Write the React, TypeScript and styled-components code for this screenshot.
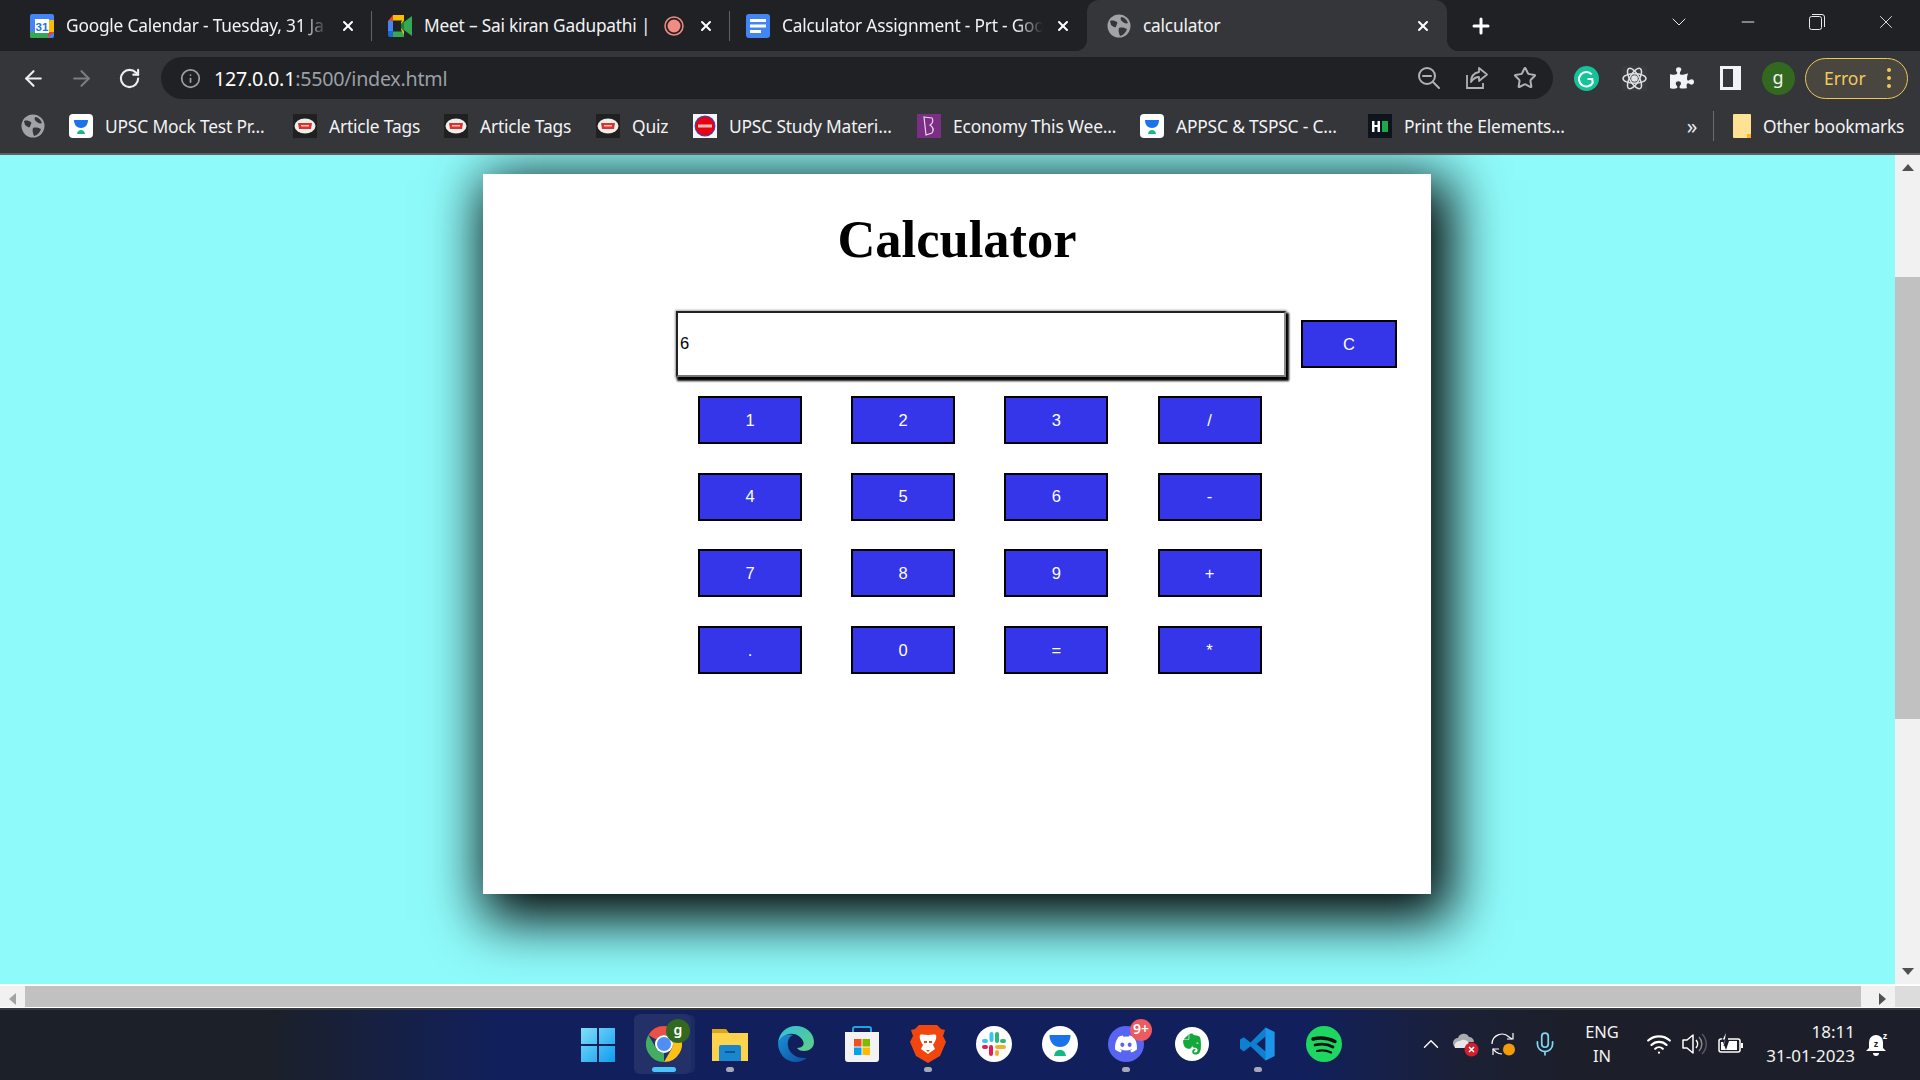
import React from "react";
import styled, { createGlobalStyle } from "styled-components";
import { ArrowLeft, ArrowRight, RotateCw, Info, Star, Plus, X, Minus, ChevronDown, ChevronUp, Wifi, Mic } from "lucide-react";
import { FaDiscord, FaEvernote, FaPuzzlePiece } from "react-icons/fa";

const Global = createGlobalStyle`
  html, body { margin: 0; padding: 0; overflow: hidden; background: #202124; }
  * { box-sizing: border-box; }
`;
const UI = `"Noto Sans", "Open Sans", sans-serif`;

const Screen = styled.div`
  width: 1920px; height: 1080px; display: flex; flex-direction: column; overflow: hidden;
  font-family: ${UI}; color: #e8eaed;
`;
/* ---------- tab strip ---------- */
const TabStrip = styled.div`
  height: 51px; background: #202124; display: flex; align-items: stretch; padding-left: 14px; flex: none;
`;
const Tab = styled.div<{ $w: number; $active?: boolean; $sep?: boolean }>`
  position: relative; width: ${p => p.$w}px; display: flex; align-items: center; gap: 12px;
  padding: 0 16px 0 ${p => (p.$active ? 20 : 16)}px;
  background: ${p => (p.$active ? "#35363a" : "transparent")};
  border-radius: ${p => (p.$active ? "12px 12px 0 0" : "0")};
  ${p => p.$sep && `&::after { content: ""; position: absolute; right: 0; top: 11px; height: 30px; width: 1px; background: #5f6368; }`}
  ${p => p.$active && `
    &::before, &::after { content: ""; position: absolute; bottom: 0; width: 12px; height: 12px; }
    &::before { left: -12px; background: radial-gradient(circle at 0 0, transparent 12px, #35363a 12.5px); }
    &::after { right: -12px; background: radial-gradient(circle at 100% 0, transparent 12px, #35363a 12.5px); }
  `}
`;
const TabTitle = styled.span<{ $fade?: boolean }>`
  flex: 1; min-width: 0; white-space: nowrap; font-size: 17.3px; color: #f1f3f4;
  letter-spacing: -0.2px; line-height: 24px;
  ${p => p.$fade && `-webkit-mask-image: linear-gradient(90deg, #000 90%, transparent 100%); mask-image: linear-gradient(90deg, #000 90%, transparent 100%);`}
`;
const RecWrap = styled.span`display: flex; margin-right: 2px; flex: none;`;
const NewTab = styled.div`
  width: 68px; display: flex; align-items: center; justify-content: center; color: #fff;
`;
const StripSpacer = styled.div`flex: 1;`;
const WinControl = styled.div`
  width: 69px; display: flex; align-items: center; justify-content: center; padding-bottom: 8px; color: #e8eaed;
`;
const WinControls = styled.div`display: flex;`;

/* ---------- toolbar ---------- */
const Toolbar = styled.div`
  height: 51px; background: #35363a; display: flex; align-items: flex-start; padding-top: 6px; flex: none;
`;
const NavButton = styled.div<{ $w: number; $dim?: boolean }>`
  width: ${p => p.$w}px; height: 42px; display: flex; align-items: center; justify-content: center;
  color: ${p => (p.$dim ? "#7b7d80" : "#eceef0")};
`;
const NavGroup = styled.div`display: flex; padding-left: 9px; width: 161px; flex: none;`;
const Omnibox = styled.div`
  width: 1392px; height: 42px; border-radius: 21px; background: #202124; display: flex; align-items: center;
  padding-left: 18px; padding-right: 4px; flex: none;
`;
const UrlIcon = styled.div`width: 22px; height: 22px; color: #9aa0a6; display: flex; align-items: center; justify-content: center;`;
const Url = styled.div`
  margin-left: 13px; font-size: 19.7px; letter-spacing: -0.25px; color: #fff; flex: 1; white-space: nowrap;
`;
const UrlRest = styled.span`color: #9aa0a6;`;
const OmniAction = styled.div`width: 48px; height: 42px; display: flex; align-items: center; justify-content: center; color: #aeb1b5;`;
const ExtGroup = styled.div`display: flex; flex: 1; padding-left: 9px; align-items: center; height: 42px;`;
const ExtSlot = styled.div`width: 48px; height: 42px; flex: none; display: flex; align-items: center; justify-content: center; color: #f1f3f4;`;
const Avatar = styled.div`
  width: 33px; height: 33px; border-radius: 50%; background: #33691e; color: #f1f3f4; font-size: 18px;
  display: flex; align-items: center; justify-content: center; padding-bottom: 3px;
`;
const ErrorPill = styled.div`
  width: 103px; height: 41px; margin-left: 3px; flex: none; border: 1.5px solid #f0c75a; border-radius: 21px; background: #48463f;
  color: #f3c95f; font-size: 17.5px; display: flex; align-items: center; justify-content: space-between; padding: 0 16px 0 18px;
`;
const Dots = styled.span`
  display: flex; flex-direction: column; gap: 3.5px;
  i { width: 4.5px; height: 4.5px; border-radius: 50%; background: #f3c95f; display: block; }
`;

/* ---------- bookmarks ---------- */
const Bookmarks = styled.div`
  height: 51px; background: #35363a; display: flex; align-items: center; flex: none; padding: 0 0 4px 21px;
`;
const Bookmark = styled.div<{ $w: number }>`
  width: ${p => p.$w}px; display: flex; align-items: center; gap: 12px; flex: none; white-space: nowrap;
  font-size: 17.4px; letter-spacing: -0.18px; color: #f1f3f4;
`;
const More = styled.div`
  width: 26px; color: #e8eaed; font-size: 21px; text-align: center; line-height: 24px;
`;
const BarSep = styled.div`width: 1px; height: 30px; background: #6a6c70; margin: 0 19px 0 8px;`;
const Divider = styled.div`height: 2px; background: #5f6063; flex: none;`;

/* ---------- page ---------- */
const Viewport = styled.div`flex: 1; min-height: 0; display: flex; background: #8ffafa;`;
const PageArea = styled.div`flex: 1; min-width: 0; overflow: hidden;`;
const Card = styled.div`
  width: 948px; height: 720px; margin: 19px 0 0 483px; background: #fff;
  box-shadow: 10px 15px 52px 10px #000; padding-top: 35px;
  font-family: "Liberation Sans", Arial, sans-serif;
`;
const Title = styled.h1`
  margin: 0; text-align: center; color: #000; font: bold 52.5px/60px "Liberation Serif", "Times New Roman", serif;
`;
const DisplayRow = styled.div`display: flex; align-items: center; margin: 42px 0 0 193px;`;
const Display = styled.input`
  width: 610px; height: 66px; padding: 0 2px 2px; background: #fff; color: #000; outline: none;
  border: 2px solid #222; border-right-color: #8a8a8a; border-bottom-color: #777;
  box-shadow: 2px 3px 2px 1px #000, 0 0 2px 1px rgba(0, 0, 0, 0.35);
  font: 16.5px "Liberation Sans", Arial, sans-serif;
`;
const KeyButton = styled.button`
  width: 104px; height: 48px; padding: 0; background: #3535ea; color: #fff; border: 2px solid #000; border-radius: 0;
  font: 16.5px "Liberation Sans", Arial, sans-serif; display: block;
`;
const ClearButton = styled(KeyButton)`width: 96px; margin-left: 15px;`;
const KeyGrid = styled.div`
  display: grid; grid-template-columns: repeat(4, 104px); column-gap: 49.2px; row-gap: 28.7px;
  margin: 19px 0 0 215px;
`;

/* ---------- scrollbars ---------- */
const VBar = styled.div`width: 25px; background: #f1f1f1; display: flex; flex-direction: column; flex: none;`;
const Arrow = styled.div<{ $dir: "up" | "down" | "left" | "right"; $dark?: boolean }>`
  width: 25px; height: 25px; flex: none; display: flex; align-items: center; justify-content: center;
  &::before {
    content: ""; width: 0; height: 0; border: 6px solid transparent;
    ${p => p.$dir === "up" && `border-top: 0; border-bottom: 7px solid ${p.$dark ? "#505050" : "#a3a3a3"};`}
    ${p => p.$dir === "down" && `border-bottom: 0; border-top: 7px solid ${p.$dark ? "#505050" : "#a3a3a3"};`}
    ${p => p.$dir === "left" && `border-left: 0; border-right: 7px solid ${p.$dark ? "#505050" : "#a3a3a3"};`}
    ${p => p.$dir === "right" && `border-right: 0; border-left: 7px solid ${p.$dark ? "#505050" : "#a3a3a3"};`}
  }
`;
const VThumbTrack = styled.div`flex: 1; padding-top: 97px;`;
const VThumb = styled.div`height: 442px; background: #c1c1c1;`;
const HBar = styled.div`
  height: 24px; flex: none; display: flex; background: #f1f1f1; border-top: 2px solid #fff; border-bottom: 1px solid #fff;
`;
const HThumb = styled.div`width: 1836px; background: #c1c1c1; flex: none;`;
const HGap = styled.div`flex: 1;`;
const Corner = styled.div`width: 25px; background: #dcdcdc; flex: none;`;

/* ---------- taskbar ---------- */
const Taskbar = styled.div`
  height: 72px; flex: none; display: flex; align-items: center; padding: 0 24px 2px 565px;
  border-top: 2px solid #34373c;
  background: linear-gradient(90deg, #1b2029 0%, #1b2029 14%, #11205c 26%, #11205c 68%, #1b2036 76%, #1c1f29 82%, #1c1f29 100%);
`;
const TaskSlot = styled.div<{ $active?: boolean; $dot?: "run" | "focus" }>`
  position: relative; width: 66px; height: 60px; display: flex; align-items: center; justify-content: center; flex: none;
  ${p => p.$active && `
    &::before { content: ""; position: absolute; left: 3px; right: 6px; top: 0; bottom: 0; border-radius: 6px;
      background: rgba(255,255,255,.08); box-shadow: 5px 0 0 -1px rgba(255,255,255,.05); }
  `}
  ${p => p.$dot === "run" && `&::after { content: ""; position: absolute; bottom: 2px; left: 29px; width: 8px; height: 5px; border-radius: 3px; background: #a5a9b8; }`}
  ${p => p.$dot === "focus" && `&::after { content: ""; position: absolute; bottom: 2px; left: 21px; width: 24px; height: 5px; border-radius: 3px; background: #4cc2ff; }`}
`;
const TaskBadge = styled.span<{ $bg: string; $size: number }>`
  position: absolute; top: 5px; right: 7px; height: ${p => p.$size}px; min-width: ${p => p.$size}px; border-radius: 50%; background: ${p => p.$bg};
  color: #fff; font-size: 14px; line-height: ${p => p.$size - 3}px; text-align: center; font-weight: 600;
`;
const Tray = styled.div`margin-left: auto; display: flex; align-items: center; height: 100%;`;
const TraySlot = styled.div<{ $w: number }>`
  width: ${p => p.$w}px; display: flex; align-items: center; justify-content: center; color: #fff; flex: none;
`;
const Lang = styled.div`
  width: 70px; text-align: center; font-size: 16.5px; line-height: 24px; color: #f3f3f3;
`;
const Clock = styled.div`
  width: 100px; margin-right: 5px; text-align: right; font-size: 17px; line-height: 24px; color: #f3f3f3; white-space: nowrap;
`;

/* ---------- drawings ---------- */
const Globe = ({ s = 24, c = "#a0a3a7", bg = "#35363a" }: { s?: number; c?: string; bg?: string }) => (
  <svg width={s} height={s} viewBox="0 0 24 24" style={{ flex: "none" }}>
    <circle cx="12" cy="12" r="11.5" fill={c} />
    <path d="M3 7c3-1 5 0 7 1 1 2-1 3-1 5-2 1-3-1-5-2z M14 3c3 0 6 3 7 6-2 1-4 0-5-1-2-1-3-3-2-5z M12 14c3-1 6 0 8 1-1 3-3 6-7 7-1-3-2-5-1-8z" fill={bg} />
  </svg>
);
const CalendarIcon = () => (
  <svg width="24" height="24" viewBox="0 0 24 24" style={{ flex: "none" }}>
    <rect x="0" y="0" width="24" height="24" rx="2" fill="#4285f4" />
    <path d="M0 18h18v6H2a2 2 0 0 1-2-2z" fill="#34a853" />
    <path d="M18 6h6v12h-6z" fill="#fbbc04" />
    <path d="M18 18h6l-6 6z" fill="#ea4335" />
    <rect x="5" y="5" width="14" height="14" fill="#fff" />
    <text x="12" y="16.5" fontSize="11.5" fontFamily="Liberation Sans" fontWeight="700" textAnchor="middle" fill="#1a73e8">31</text>
  </svg>
);
const MeetIcon = () => (
  <svg width="24" height="22" viewBox="0 0 24 22" style={{ flex: "none" }}>
    <path d="M5 0h11v5.500H5z" fill="#fbbc04" /><path d="M5 0v6H0z" fill="#ea4335" />
    <path d="M0 6h5v10H0z" fill="#4285f4" /><path d="M0 16h5v6H2a2 2 0 0 1-2-2z" fill="#1967d2" />
    <path d="M5 16.500h11V22H5z" fill="#34a853" /><path d="M16 2v18l-5-9z" fill="#fbbc04" />
    <path d="M11 11l5-5.500V16.500z" fill="#188038" /><path d="M16 7l8-6v20l-8-6z" fill="#34a853" />
    <rect x="5" y="6" width="8" height="10" fill="#202124" />
  </svg>
);
const DocsIcon = () => (
  <svg width="24" height="24" viewBox="0 0 24 24" style={{ flex: "none" }}>
    <rect width="24" height="24" rx="3" fill="#4285f4" />
    <path d="M4 5h16v3H4zM4 10.500h16v3H4zM4 16h11v3H4z" fill="#fff" />
  </svg>
);
const RecIcon = () => (
  <svg width="20" height="20" viewBox="0 0 20 20" style={{ flex: "none" }}>
    <circle cx="10" cy="10" r="9" fill="none" stroke="#f28b82" strokeWidth="1.500" /><circle cx="10" cy="10" r="6.500" fill="#f28b82" />
  </svg>
);
const ZoomOutIcon = () => (
  <svg width="24" height="24" viewBox="0 0 24 24" fill="none" stroke="currentColor" strokeWidth="2" strokeLinecap="round">
    <circle cx="10" cy="10" r="8" /><path d="M6 10h8M16 16l6 6" />
  </svg>
);
const ShareIcon = () => (
  <svg width="24" height="24" viewBox="0 0 24 24" fill="none" stroke="currentColor" strokeWidth="1.800">
    <path d="M2 9v13h16v-5" /><path d="M14 2l8 6.500-8 6.500v-4c-4 0-6 2-8 5 0-6 3-9 8-10z" strokeLinejoin="round" />
  </svg>
);
const Grammarly = () => (
  <svg width="25" height="25" viewBox="0 0 24 24">
    <circle cx="12" cy="12" r="12" fill="#15c39a" />
    <path d="M17 8a7 7 0 1 0 1 8l-.5-3.500H13" fill="none" stroke="#fff" strokeWidth="2" />
  </svg>
);
const Atom = () => (
  <svg width="25" height="25" viewBox="0 0 24 24" fill="none" stroke="#dfe1e5" strokeWidth="1.400" style={{ background: "#3a3b3f" }}>
    <ellipse cx="12" cy="12" rx="11" ry="4.500" /><ellipse cx="12" cy="12" rx="11" ry="4.500" transform="rotate(60 12 12)" />
    <ellipse cx="12" cy="12" rx="11" ry="4.500" transform="rotate(120 12 12)" /><circle cx="12" cy="12" r="2.500" fill="#dfe1e5" />
  </svg>
);
const Sidebar = () => (
  <svg width="21" height="24" viewBox="0 0 21 24"><rect width="21" height="24" fill="#f1f3f4" /><rect x="3" y="3" width="10" height="18" fill="#35363a" /></svg>
);
const BijuIcon = ({ s = 24 }: { s?: number }) => (
  <svg width={s} height={s} viewBox="0 0 24 24" style={{ flex: "none" }}>
    <rect width="24" height="24" rx="4" fill="#fff" />
    <path d="M5 6h14c0 5-3 8-7 8s-7-3-7-8z" fill="#1a73e8" /><path d="M8 20c.5-3 2-4 4-4s3.500 1 4 4z" fill="#12b886" />
  </svg>
);
const GfgIcon = () => (
  <svg width="24" height="24" viewBox="0 0 24 24" style={{ flex: "none" }}>
    <rect width="24" height="24" fill="#202020" /><ellipse cx="12" cy="12" rx="10.500" ry="7.500" fill="#eee" />
    <path d="M5 9h14l-1 6H6z" fill="#d9342b" /><path d="M8 11h8v1.500H8z" fill="#f3c0bd" />
  </svg>
);
const StopIcon = () => (
  <svg width="24" height="24" viewBox="0 0 24 24" style={{ flex: "none" }}>
    <rect width="24" height="24" fill="#f4f6fc" /><circle cx="12" cy="12" r="10.500" fill="#2b4fc7" /><circle cx="12" cy="12" r="9.500" fill="#e60012" />
    <rect x="5" y="10.500" width="14" height="3" fill="#fbb" />
  </svg>
);
const ByjuB = () => (
  <svg width="24" height="24" viewBox="0 0 24 24" style={{ flex: "none" }}>
    <rect width="24" height="24" fill="#7a2e84" />
    <path d="M7 3l8 1c2 3 0 6-2 7 3 2 4 5 2 8l-6 2z" fill="none" stroke="#e9d6ec" strokeWidth="1.200" />
  </svg>
);
const HackerRank = () => (
  <svg width="24" height="24" viewBox="0 0 24 24" style={{ flex: "none" }}>
    <rect width="24" height="24" fill="#0e141e" />
    <path d="M4 7h2.500v4h3V7H12v11H9.500v-5h-3v5H4z" fill="#fff" /><rect x="14" y="7" width="6" height="11" fill="#1ba94c" />
  </svg>
);
const FolderIcon = () => (
  <svg width="18" height="24" viewBox="0 0 18 24" style={{ flex: "none" }}>
    <path d="M1 0h16a1 1 0 0 1 1 1v23H1a1 1 0 0 1-1-1V1a1 1 0 0 1 1-1z" fill="#fde293" />
    <path d="M14 24v-4h4v4z" fill="#f9ab00" opacity=".8" />
  </svg>
);
/* taskbar */
const WinLogo = () => (
  <svg width="36" height="36" viewBox="0 0 36 36">
    <defs><linearGradient id="w" x1="0" y1="0" x2="1" y2="1"><stop offset="0" stopColor="#7fe0f7" /><stop offset="1" stopColor="#0f9bf0" /></linearGradient></defs>
    <path d="M1 2h16v16H1zM19 2h16v16H19zM1 20h16v16H1zM19 20h16v16H19z" fill="url(#w)" />
  </svg>
);
const ChromeIcon = () => (
  <svg width="36" height="36" viewBox="0 0 36 36">
    <path d="M18 0a18 18 0 0 1 15.600 9H18a9 9 0 0 0-7.800 4.500L2.400 9A18 18 0 0 1 18 0z" fill="#ea4335" />
    <path d="M33.600 9A18 18 0 0 1 18 36l7.800-13.500a9 9 0 0 0 0-9z" fill="#fbbc04" />
    <path d="M18 36A18 18 0 0 1 2.400 9l7.800 13.500a9 9 0 0 0 7.800 4.500z" fill="#34a853" />
    <circle cx="18" cy="18" r="9" fill="#fff" /><circle cx="18" cy="18" r="7" fill="#4285f4" />
  </svg>
);
const FilesIcon = () => (
  <svg width="36" height="36" viewBox="0 0 36 36">
    <path d="M0 3h14l3 4h19v27H0z" fill="#d9a516" /><rect y="7" width="36" height="28" fill="#fcd34d" />
    <path d="M7 21a2 2 0 0 1 2-2h18a2 2 0 0 1 2 2v14H7z" fill="#1a86d0" /><rect x="13" y="25" width="10" height="2" fill="#0b5a94" />
  </svg>
);
const EdgeIcon = () => (
  <svg width="36" height="36" viewBox="0 0 36 36">
    <defs>
      <linearGradient id="e1" x1="0" y1="0" x2="1" y2="1"><stop offset="0" stopColor="#33bfe0" /><stop offset="1" stopColor="#5fd07f" /></linearGradient>
      <linearGradient id="e2" x1="0" y1="0" x2="1" y2="1"><stop offset="0" stopColor="#1b8fd6" /><stop offset="1" stopColor="#0c4f9f" /></linearGradient>
    </defs>
    <path d="M18 0c10 0 18 7 18 16 0 6-5 9-10 9-3 0-6-1-7-3 5 0 8-3 6-7C22 9 15 6 8 9c-4 2-7 5-8 8C1 7 8 0 18 0z" fill="url(#e1)" />
    <path d="M0 17c2-7 9-10 15-8-4 2-6 6-5 11 1 7 8 13 19 12-3 2-7 4-11 4C8 36 0 28 0 17z" fill="url(#e2)" />
  </svg>
);
const StoreIcon = () => (
  <svg width="36" height="36" viewBox="0 0 36 36">
    <path d="M9 8V3a2 2 0 0 1 2-2h14a2 2 0 0 1 2 2v5" fill="none" stroke="#20a4e0" strokeWidth="2" />
    <path d="M1 6h34v27a3 3 0 0 1-3 3H4a3 3 0 0 1-3-3z" fill="#f3f3f3" />
    <path d="M10 13h7.500v7.500H10z" fill="#f25022" /><path d="M18.500 13H26v7.500h-7.500z" fill="#7fba00" />
    <path d="M10 21.500h7.500V29H10z" fill="#00a4ef" /><path d="M18.500 21.500H26V29h-7.500z" fill="#ffb900" />
  </svg>
);
const BraveIcon = () => (
  <svg width="36" height="38" viewBox="0 0 36 38">
    <path d="M9 0h18l4 4 4 1-2 6 3 6-6 14-12 7-12-7L0 17l3-6-2-6 4-1z" fill="#f1470f" />
    <path d="M18 10c-3 0-6-1-8 0-1 3 1 7 3 10l-2 4 7 5 7-5-2-4c2-3 4-7 3-10-2-1-5 0-8 0z" fill="#fff" />
    <path d="M14 16h3v2h-3zM19 16h3v2h-3zM16 25h4l-2 2z" fill="#f1470f" />
  </svg>
);
const SlackIcon = () => (
  <svg width="36" height="36" viewBox="0 0 36 36">
    <circle cx="18" cy="18" r="18" fill="#fff" />
    <g fill="none" strokeWidth="4" strokeLinecap="round">
      <path d="M15.500 8v6M8 15h2" stroke="#36c5f0" /><path d="M21 8v7M28 15h-2" stroke="#2eb67d" />
      <path d="M21 28v-2M28 21h-7" stroke="#ecb22e" /><path d="M15 28v-7M8 21h2" stroke="#e01e5a" />
    </g>
  </svg>
);
const DiscordTile = () => (
  <div style={{ width: 36, height: 36, borderRadius: "50%", background: "#5865f2", display: "flex", alignItems: "center", justifyContent: "center" }}>
    <FaDiscord size={24} color="#fff" />
  </div>
);
const EvernoteTile = () => (
  <div style={{ width: 34, height: 34, borderRadius: "50%", background: "#fff", display: "flex", alignItems: "center", justifyContent: "center" }}>
    <FaEvernote size={24} color="#14a83b" />
  </div>
);
const VsCode = () => (
  <svg width="36" height="38" viewBox="0 0 24 24">
    <path d="M17 1l6 3v16l-6 3-10-9.500-4.500 3.500L0 15V9l2.500-1.500L7 11zM17 7l-6 5 6 5z" fill="#0f7fd1" />
    <path d="M17 1l6 3v16l-6 3z" fill="#1f9cf0" fillOpacity=".8" />
  </svg>
);
const Spotify = () => (
  <svg width="36" height="36" viewBox="0 0 36 36">
    <circle cx="18" cy="18" r="18" fill="#1ed760" />
    <g fill="none" stroke="#111" strokeLinecap="round"><path d="M7 13c8-2 15-1 22 2.500" strokeWidth="3.400" /><path d="M9 19c6-1.500 13-1 18 2" strokeWidth="2.800" /><path d="M11 25c5-1 10-.5 14 1.500" strokeWidth="2.200" /></g>
  </svg>
);
const CloudX = () => (
  <svg width="26" height="26" viewBox="0 0 26 26">
    <path d="M5 17a5 5 0 0 1 0-10 6 6 0 0 1 11-1 5 5 0 0 1 5 5H12v6z" fill="#a9abb1" />
    <path d="M2 17a5 5 0 0 1 5-7 6 6 0 0 1 9 2v5z" fill="#e8e8e8" />
    <circle cx="18.500" cy="18.500" r="7" fill="#d21f2e" /><path d="M16 16l5 5m0-5l-5 5" stroke="#fff" strokeWidth="1.600" />
  </svg>
);
const SyncDot = () => (
  <svg width="26" height="26" viewBox="0 0 26 26" fill="none" stroke="#fff" strokeWidth="1.200">
    <path d="M2 13a10 10 0 0 1 17-7l3 2" /><path d="M23 2v6h-6" /><path d="M3 24v-6h6" /><path d="M3 18l3 3a10 10 0 0 0 6 2" />
    <circle cx="19" cy="18.500" r="6" fill="#f59b0a" stroke="none" />
  </svg>
);
const Speaker = () => (
  <svg width="26" height="24" viewBox="0 0 26 24" fill="none" strokeWidth="1.500">
    <path d="M2 8h4l6-5v18l-6-5H2z" stroke="#fff" strokeLinejoin="round" />
    <path d="M15 8a6 6 0 0 1 0 8" stroke="#fff" /><path d="M18 5a10 10 0 0 1 0 14" stroke="#8a8a8a" /><path d="M21 2a14 14 0 0 1 0 20" stroke="#55585f" />
  </svg>
);
const Battery = () => (
  <svg width="26" height="24" viewBox="0 0 26 24" fill="none" stroke="#fff" strokeWidth="1.500">
    <path d="M5 7H3a2 2 0 0 0-2 2v9a2 2 0 0 0 2 2h17a2 2 0 0 0 2-2V9a2 2 0 0 0-2-2H10" />
    <path d="M3 18V10h2l3 8z M11 9h8v9H8z" fill="#fff" stroke="none" /><rect x="23" y="11" width="2" height="5" fill="#fff" stroke="none" />
    <path d="M8 0L4 8h4L6 14" fill="#fff" stroke="#1c1f29" strokeWidth="1" />
  </svg>
);
const Bell = () => (
  <svg width="24" height="26" viewBox="0 0 24 26">
    <path d="M10 4a7 7 0 0 1 7 7v6l3 3H0l3-3v-6a7 7 0 0 1 7-7z" fill="#fff" /><path d="M7 22h6a3 3 0 0 1-6 0z" fill="#fff" />
    <text x="10" y="16" fontSize="9" fontWeight="700" fontFamily="Liberation Sans" textAnchor="middle" fill="#1c1f29">z</text>
    <text x="19" y="8" fontSize="9" fontWeight="700" fontFamily="Liberation Sans" textAnchor="middle" fill="#fff">z</text>
  </svg>
);

const keys = ["1", "2", "3", "/", "4", "5", "6", "-", "7", "8", "9", "+", ".", "0", "=", "*"];

export default function App() {
  return (
    <Screen>
      <Global />
      <TabStrip>
        <Tab $w={358} $sep>
          <CalendarIcon />
          <TabTitle $fade>Google Calendar - Tuesday, 31 Ja</TabTitle>
          <X size={16} strokeWidth={3} color="#fff" />
        </Tab>
        <Tab $w={358} $sep>
          <MeetIcon />
          <TabTitle>Meet – Sai kiran Gadupathi |</TabTitle>
          <RecWrap><RecIcon /></RecWrap>
          <X size={16} strokeWidth={3} color="#fff" />
        </Tab>
        <Tab $w={357}>
          <DocsIcon />
          <TabTitle $fade>Calculator Assignment - Prt - Goo</TabTitle>
          <X size={16} strokeWidth={3} color="#fff" />
        </Tab>
        <Tab $w={360} $active>
          <Globe />
          <TabTitle>calculator</TabTitle>
          <X size={16} strokeWidth={3} color="#fff" />
        </Tab>
        <NewTab><Plus size={24} strokeWidth={3} /></NewTab>
        <StripSpacer />
        <WinControls>
          <WinControl><ChevronDown size={24} strokeWidth={1} /></WinControl>
          <WinControl><Minus size={20} strokeWidth={1.2} /></WinControl>
          <WinControl>
            <svg width="16" height="16" viewBox="0 0 16 16" fill="none" stroke="#e8eaed"><rect x="0.500" y="2.500" width="12" height="13" rx="2" /><path d="M3 .5h10a2.500 2.500 0 0 1 2.500 2.500v10" /></svg>
          </WinControl>
          <WinControl><X size={22} strokeWidth={1} /></WinControl>
        </WinControls>
      </TabStrip>

      <Toolbar>
        <NavGroup>
          <NavButton $w={48}><ArrowLeft size={25} strokeWidth={2} /></NavButton>
          <NavButton $w={48} $dim><ArrowRight size={25} strokeWidth={2} /></NavButton>
          <NavButton $w={48}><RotateCw size={23} strokeWidth={2.2} /></NavButton>
        </NavGroup>
        <Omnibox>
          <UrlIcon><Info size={21} strokeWidth={2} /></UrlIcon>
          <Url>127.0.0.1<UrlRest>:5500/index.html</UrlRest></Url>
          <OmniAction><ZoomOutIcon /></OmniAction>
          <OmniAction><ShareIcon /></OmniAction>
          <OmniAction><Star size={24} strokeWidth={2} /></OmniAction>
        </Omnibox>
        <ExtGroup>
          <ExtSlot><Grammarly /></ExtSlot>
          <ExtSlot><Atom /></ExtSlot>
          <ExtSlot><FaPuzzlePiece size={24} /></ExtSlot>
          <ExtSlot><Sidebar /></ExtSlot>
          <ExtSlot><Avatar>g</Avatar></ExtSlot>
          <ErrorPill>Error<Dots><i /><i /><i /></Dots></ErrorPill>
        </ExtGroup>
      </Toolbar>

      <Bookmarks>
        <Bookmark $w={48}><Globe /></Bookmark>
        <Bookmark $w={224}><BijuIcon />UPSC Mock Test Pr...</Bookmark>
        <Bookmark $w={151}><GfgIcon />Article Tags</Bookmark>
        <Bookmark $w={152}><GfgIcon />Article Tags</Bookmark>
        <Bookmark $w={97}><GfgIcon />Quiz</Bookmark>
        <Bookmark $w={224}><StopIcon />UPSC Study Materi...</Bookmark>
        <Bookmark $w={223}><ByjuB />Economy This Wee...</Bookmark>
        <Bookmark $w={228}><BijuIcon />APPSC &amp; TSPSC - C...</Bookmark>
        <Bookmark $w={311}><HackerRank />Print the Elements...</Bookmark>
        <More>»</More>
        <BarSep />
        <Bookmark $w={180}><FolderIcon />Other bookmarks</Bookmark>
      </Bookmarks>
      <Divider />

      <Viewport>
        <PageArea>
          <Card>
            <Title>Calculator</Title>
            <DisplayRow>
              <Display readOnly value="6" />
              <ClearButton>C</ClearButton>
            </DisplayRow>
            <KeyGrid>
              {keys.map((k, i) => <KeyButton key={i}>{k}</KeyButton>)}
            </KeyGrid>
          </Card>
        </PageArea>
        <VBar>
          <Arrow $dir="up" $dark />
          <VThumbTrack><VThumb /></VThumbTrack>
          <Arrow $dir="down" $dark />
        </VBar>
      </Viewport>
      <HBar>
        <Arrow $dir="left" />
        <HThumb />
        <HGap />
        <Arrow $dir="right" $dark />
        <Corner />
      </HBar>

      <Taskbar>
        <TaskSlot><WinLogo /></TaskSlot>
        <TaskSlot $active $dot="focus"><ChromeIcon /><TaskBadge $bg="#33691e" $size={24}>g</TaskBadge></TaskSlot>
        <TaskSlot $dot="run"><FilesIcon /></TaskSlot>
        <TaskSlot><EdgeIcon /></TaskSlot>
        <TaskSlot><StoreIcon /></TaskSlot>
        <TaskSlot $dot="run"><BraveIcon /></TaskSlot>
        <TaskSlot><SlackIcon /></TaskSlot>
        <TaskSlot><svg width="36" height="36" viewBox="0 0 24 24"><circle cx="12" cy="12" r="12" fill="#fff" /><path d="M5 6h14c0 5-3 8-7 8s-7-3-7-8z" fill="#1a73e8" /><path d="M8 20c.5-3 2-4 4-4s3.500 1 4 4z" fill="#12b886" /></svg></TaskSlot>
        <TaskSlot $dot="run"><DiscordTile /><TaskBadge $bg="#ed5a5f" $size={22}>9+</TaskBadge></TaskSlot>
        <TaskSlot><EvernoteTile /></TaskSlot>
        <TaskSlot $dot="run"><VsCode /></TaskSlot>
        <TaskSlot><Spotify /></TaskSlot>
        <Tray>
          <TraySlot $w={36}><ChevronUp size={26} strokeWidth={1.300} /></TraySlot>
          <TraySlot $w={34}><CloudX /></TraySlot>
          <TraySlot $w={40}><SyncDot /></TraySlot>
          <TraySlot $w={44}><Mic size={26} strokeWidth={1.600} color="#7fd6ee" /></TraySlot>
          <TraySlot $w={70}><Lang>ENG<br />IN</Lang></TraySlot>
          <TraySlot $w={44}><Wifi size={26} strokeWidth={2} /></TraySlot>
          <TraySlot $w={26}><Speaker /></TraySlot>
          <TraySlot $w={48}><Battery /></TraySlot>
          <Clock>18:11<br />31-01-2023</Clock>
          <TraySlot $w={36}><Bell /></TraySlot>
        </Tray>
      </Taskbar>
    </Screen>
  );
}
